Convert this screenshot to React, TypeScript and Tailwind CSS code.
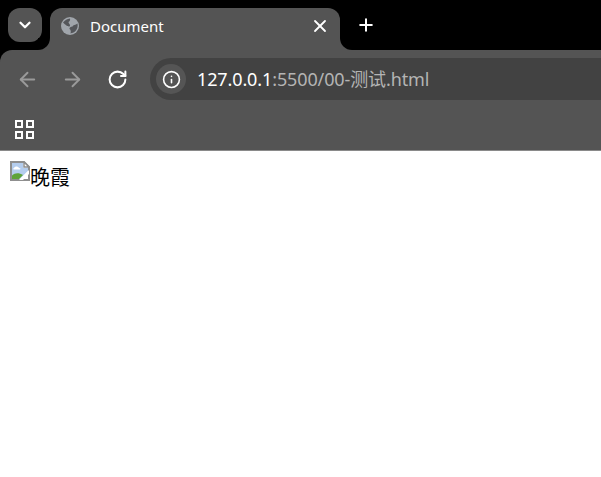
import { ArrowLeft, ArrowRight, ChevronDown, Info, Plus, RotateCw, X } from 'lucide-react'

function GlobeIcon() {
  return (
    <svg width="18" height="18" viewBox="0 0 18 18" className="shrink-0">
      <circle cx="9" cy="9" r="9" fill="#a0a5ab" />
      <path d="M2 5.5 C4 3 6 2 9 1.5 C9.5 3 8.5 4.5 7.5 5 C7.5 6.5 9 7 9 8.5 C9 10 6.5 9.5 5.5 8.5 C4 7.5 3 6.5 2 5.5 Z" fill="#54565a" />
      <path d="M16.5 6.5 C17 9 16.5 12 14.5 14 C13 15.5 11 16 9.5 16.5 C10 14.5 10 13 8.5 12 C8 10.5 10 9.5 11.5 9.5 C12 8 14.5 8 16.5 6.5 Z" fill="#54565a" />
    </svg>
  )
}

function BrokenImage() {
  return (
    <svg width="20" height="20" viewBox="0 0 20 20" className="block shrink-0">
      <path d="M1 1 H14 L19 6 V19 H1 Z" fill="#ffffff" stroke="#8f8f8f" strokeWidth="2" />
      <path d="M14 1 V6 H19 Z" fill="#ffffff" stroke="#8f8f8f" strokeWidth="1.5" />
      <path d="M2 2 H13 V7 H18 V10 L10 18 H2 Z" fill="#b4cdee" />
      <path d="M4 7 C5 5 8 5 9 7 C10.5 7 11 8 10 8.5 H4 C3 8.5 3 7 4 7 Z" fill="#ffffff" />
      <path d="M2 18 V14.5 C5 11.5 9 11.5 13 14 L9 18 Z" fill="#5ea33a" />
      <path d="M9 19 L19 9 V13 L13 19 Z" fill="#ffffff" />
    </svg>
  )
}

export default function App() {
  return (
    <div className="h-[477px] w-[601px] overflow-hidden bg-white font-['Noto_Sans','Noto_Sans_CJK_SC',sans-serif]">
      <div className="bg-black">
        <div className="flex h-[50px] items-start gap-2 pl-2 pt-2">
          <div className="flex h-[34px] w-[34px] items-center justify-center rounded-xl bg-[#545454]">
            <ChevronDown size={18} strokeWidth={3} className="text-white" />
          </div>
          <div className="relative flex h-[42px] w-[290px] items-center rounded-t-[12px] bg-[#545454] pb-[6px] pl-[11px] pr-[10px]">
            <div className="absolute -left-3 bottom-0 h-3 w-3 bg-[#545454]">
              <div className="h-3 w-3 rounded-br-[12px] bg-black" />
            </div>
            <div className="absolute -right-3 bottom-0 h-3 w-3 bg-[#545454]">
              <div className="h-3 w-3 rounded-bl-[12px] bg-black" />
            </div>
            <GlobeIcon />
            <span className="ml-[11px] flex-1 text-[15px] text-white">Document</span>
            <X size={20} strokeWidth={2.2} className="text-white" />
          </div>
          <div className="flex h-[34px] w-[34px] items-center justify-center pl-[2px]">
            <Plus size={20} strokeWidth={2.4} className="text-white" />
          </div>
        </div>
        <div className="flex h-[58px] items-center rounded-tl-[12px] bg-[#545454] pl-4">
          <ArrowLeft size={23} strokeWidth={2} className="text-[#9a9a9a]" />
          <ArrowRight size={23} strokeWidth={2} className="ml-[22px] text-[#9a9a9a]" />
          <RotateCw size={21} strokeWidth={2.3} className="ml-[23px] text-white" />
          <div className="ml-[22px] flex h-[42px] flex-1 items-center rounded-l-full bg-[#424242] pl-[6px]">
            <div className="flex h-[30px] w-[30px] items-center justify-center rounded-full bg-[#555555]">
              <Info size={19} strokeWidth={2} className="text-white" />
            </div>
            <span className="ml-[11px] text-[18px] leading-none tracking-[-0.12px] text-white">
              127.0.0.1<span className="text-[#b4b4b4]">:5500/00-测试.html</span>
            </span>
          </div>
        </div>
      </div>
      <div className="flex h-[43px] items-center border-b border-[#8a8a8a] bg-[#545454] pl-[15px]">
        <div className="grid grid-cols-2 gap-[3px]">
          <div className="h-2 w-2 border-2 border-white" />
          <div className="h-2 w-2 border-2 border-white" />
          <div className="h-2 w-2 border-2 border-white" />
          <div className="h-2 w-2 border-2 border-white" />
        </div>
      </div>
      <div className="flex items-start p-[10px] text-[20px] leading-[34px] text-black">
        <BrokenImage />
        <span>晚霞</span>
      </div>
    </div>
  )
}
